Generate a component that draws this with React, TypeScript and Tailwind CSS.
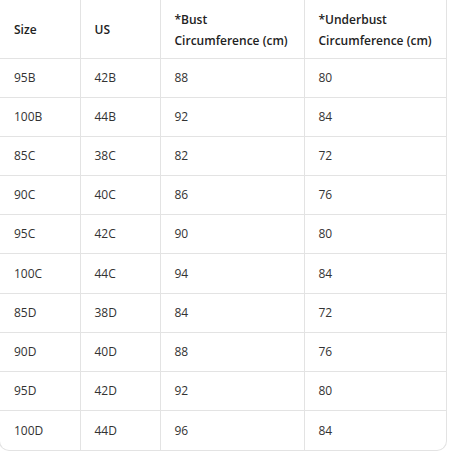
import React from "react"

const rows = [
  ["95B", "42B", "88", "80"],
  ["100B", "44B", "92", "84"],
  ["85C", "38C", "82", "72"],
  ["90C", "40C", "86", "76"],
  ["95C", "42C", "90", "80"],
  ["100C", "44C", "94", "84"],
  ["85D", "38D", "84", "72"],
  ["90D", "40D", "88", "76"],
  ["95D", "42D", "92", "80"],
  ["100D", "44D", "96", "84"],
]

export default function App() {
  return (
    <div className="h-[454px] w-[450px] overflow-hidden bg-white font-['Open_Sans','Noto_Sans',sans-serif] text-[12px] text-[#333]">
      <div className="ml-[-1px] w-[448px] overflow-hidden rounded-b-[10px] border border-t-0 border-[#e3e3e3]">
        <table className="w-full table-fixed border-collapse">
          <colgroup>
            <col className="w-[80px]" />
            <col className="w-[80px]" />
            <col className="w-[144px]" />
            <col />
          </colgroup>
          <thead>
            <tr className="h-[58px] whitespace-nowrap text-left text-[#222]">
              <th className="px-[14px] pt-[2px] font-semibold leading-[21px]">Size</th>
              <th className="border-l border-[#e3e3e3] px-[14px] pt-[2px] font-semibold leading-[21px]">US</th>
              <th className="border-l border-[#e3e3e3] px-[14px] pt-[2px] font-semibold leading-[21px]">
                *Bust
                <br />
                Circumference (cm)
              </th>
              <th className="border-l border-[#e3e3e3] px-[14px] pt-[2px] font-semibold leading-[21px]">
                *Underbust
                <br />
                Circumference (cm)
              </th>
            </tr>
          </thead>
          <tbody>
            {rows.map((r) => (
              <tr key={r[0]} className="h-[39.2px] border-t border-[#e3e3e3]">
                <td className="px-[14px]">{r[0]}</td>
                <td className="border-l border-[#e3e3e3] px-[14px]">{r[1]}</td>
                <td className="border-l border-[#e3e3e3] px-[14px]">{r[2]}</td>
                <td className="border-l border-[#e3e3e3] px-[14px]">{r[3]}</td>
              </tr>
            ))}
          </tbody>
        </table>
      </div>
    </div>
  )
}
